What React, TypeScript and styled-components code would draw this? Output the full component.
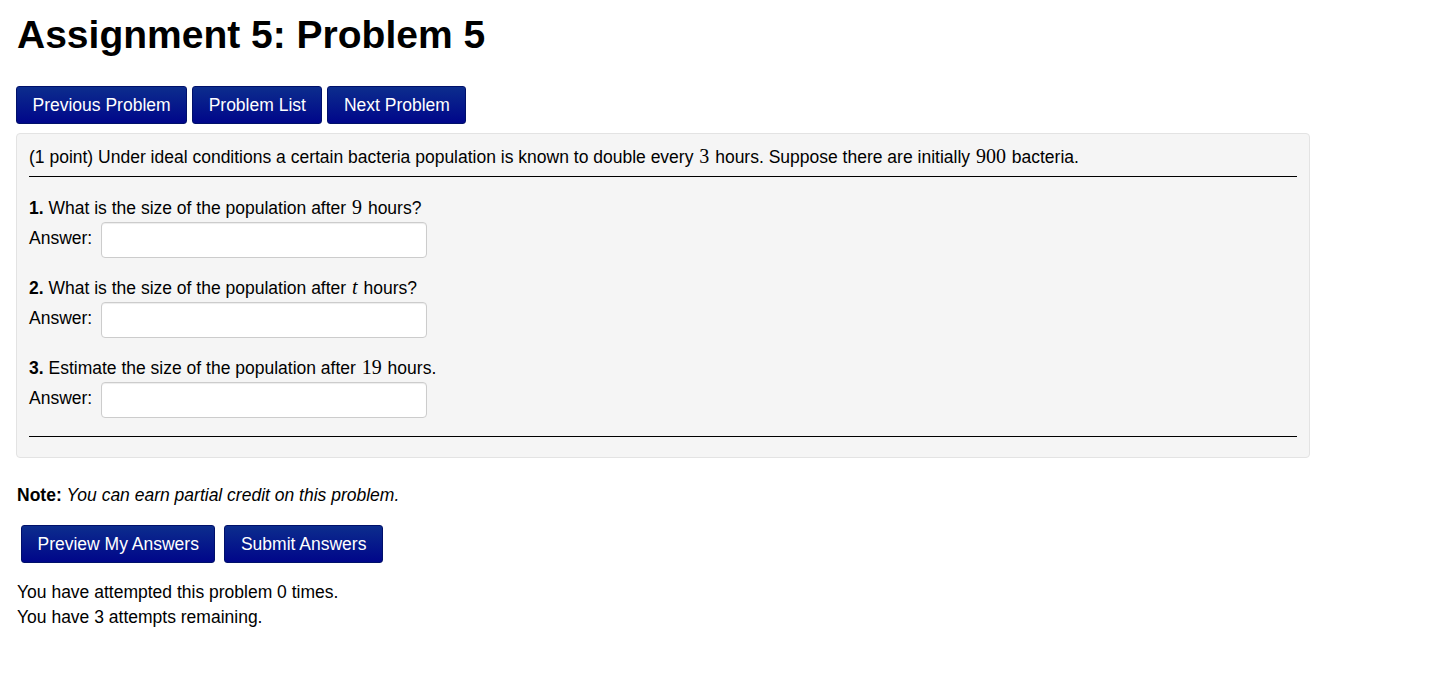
import styled, { createGlobalStyle } from 'styled-components';

const GlobalStyle = createGlobalStyle`
    html, body {
        margin: 0;
        padding: 0;
        background: #ffffff;
    }
    body {
        font-family: "Liberation Sans", Arial, sans-serif;
        font-size: 17.5px;
        line-height: 25px;
        color: #000000;
    }
`;

const Page = styled.div`
    padding: 0 16px;
`;

const Title = styled.h1`
    margin: 12px 0 29px 1px;
    font-size: 39px;
    line-height: 45px;
    font-weight: bold;
`;

const ButtonRow = styled.div<{ $indent?: number; $gap?: number }>`
    display: flex;
    gap: ${(p) => p.$gap ?? 5}px;
    margin-left: ${(p) => p.$indent ?? 0}px;
`;

const NavButton = styled.button`
    height: 38px;
    padding: 0 15.5px;
    border: 1px solid #00106a;
    border-radius: 3px;
    background: linear-gradient(to bottom, #0c2d8d, #00068a);
    color: #ffffff;
    font-family: "Liberation Sans", Arial, sans-serif;
    font-size: 17.5px;
    line-height: 20px;
    cursor: pointer;
    &:hover {
        background: #0c2d8d;
    }
`;

const ProblemBox = styled.div`
    margin-top: 9px;
    width: 1294px;
    box-sizing: border-box;
    padding: 10px 12px 20px;
    background: #f5f5f5;
    border: 1px solid #e3e3e3;
    border-radius: 4px;
`;

const Rule = styled.hr<{ $top: number; $bottom: number }>`
    margin: ${(p) => p.$top}px 0 ${(p) => p.$bottom}px;
    border: 0;
    border-top: 1px solid #000000;
    height: 0;
`;

const Line = styled.div``;

const MathNum = styled.span<{ $italic?: boolean }>`
    font-family: "Liberation Serif", "Times New Roman", serif;
    font-size: 20px;
    font-style: ${(p) => (p.$italic ? 'italic' : 'normal')};
    padding: 0 1px;
`;

const Question = styled.div`
    margin-bottom: 17px;
`;

const AnswerRow = styled.div`
    display: flex;
    align-items: center;
    gap: 9px;
    margin-top: 1px;
    span {
        margin-top: -4px;
    }
`;

const AnswerInput = styled.input`
    width: 326px;
    height: 36px;
    box-sizing: border-box;
    padding: 4px 8px;
    border: 1px solid #cccccc;
    border-radius: 4px;
    background: #ffffff;
    box-shadow: inset 0 1px 1px rgba(0, 0, 0, 0.075);
    font-family: "Liberation Sans", Arial, sans-serif;
    font-size: 17.5px;
`;

const Note = styled.div`
    margin: 25px 0 17px 1px;
    em {
        font-style: italic;
    }
`;

const Attempts = styled.div`
    margin: 17px 0 0 1px;
`;

const questions = [
    { n: 1, before: 'What is the size of the population after ', math: '9', italic: false, after: ' hours?' },
    { n: 2, before: 'What is the size of the population after ', math: 't', italic: true, after: ' hours?' },
    { n: 3, before: 'Estimate the size of the population after ', math: '19', italic: false, after: ' hours.' },
];

const App = () => {
    return (
        <Page>
            <GlobalStyle />
            <Title>Assignment 5: Problem 5</Title>
            <ButtonRow>
                <NavButton>Previous Problem</NavButton>
                <NavButton>Problem List</NavButton>
                <NavButton>Next Problem</NavButton>
            </ButtonRow>
            <ProblemBox>
                <Line>
                    (1 point) Under ideal conditions a certain bacteria population is known to double every{' '}
                    <MathNum>3</MathNum> hours. Suppose there are initially <MathNum>900</MathNum> bacteria.
                </Line>
                <Rule $top={6} $bottom={18} />
                {questions.map((q) => (
                    <Question key={q.n}>
                        <Line>
                            <b>{q.n}.</b> {q.before}
                            <MathNum $italic={q.italic}>{q.math}</MathNum>
                            {q.after}
                        </Line>
                        <AnswerRow>
                            <span>Answer:</span>
                            <AnswerInput type="text" />
                        </AnswerRow>
                    </Question>
                ))}
                <Rule $top={18} $bottom={0} />
            </ProblemBox>
            <Note>
                <b>Note:</b> <em>You can earn partial credit on this problem.</em>
            </Note>
            <ButtonRow $indent={5} $gap={9}>
                <NavButton>Preview My Answers</NavButton>
                <NavButton>Submit Answers</NavButton>
            </ButtonRow>
            <Attempts>
                You have attempted this problem 0 times.
                <br />
                You have 3 attempts remaining.
            </Attempts>
        </Page>
    );
};

export default App;
